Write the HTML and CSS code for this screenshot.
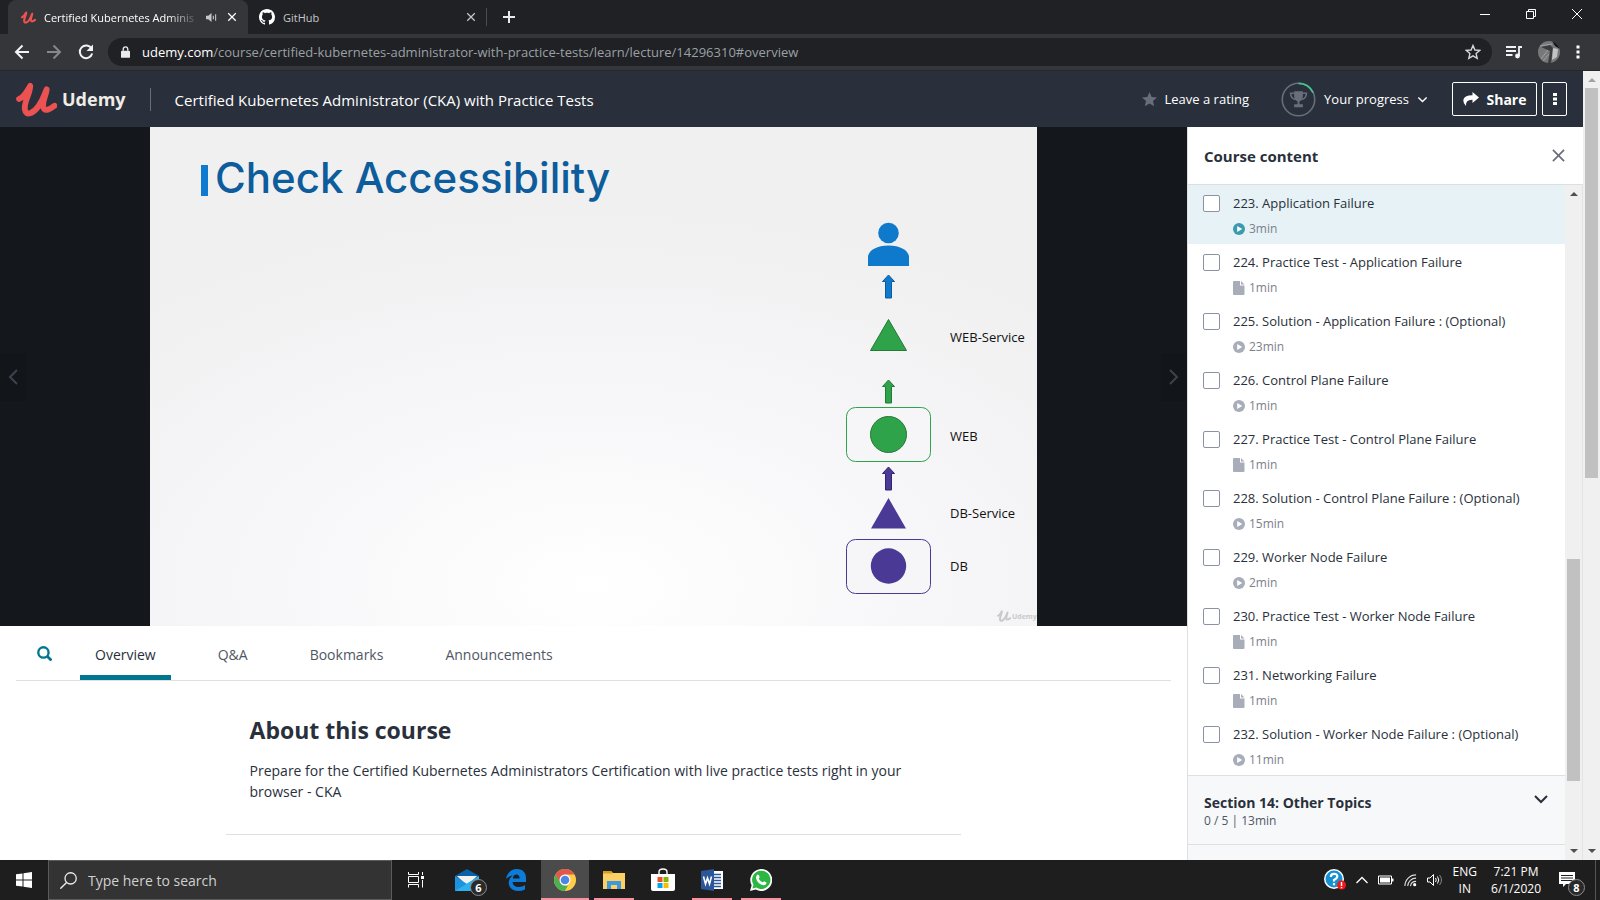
FILE: index.html
```html
<!DOCTYPE html>
<html lang="en">
<head>
<meta charset="utf-8">
<title>Certified Kubernetes Administrator (CKA) with Practice Tests</title>
<link rel="stylesheet" href="styles.css">
</head>
<body>
<svg class="defs" aria-hidden="true">
  <symbol id="udemy" viewBox="0 0 42 36">
    <path d="M3 17.500C8 16 11 10 14.500 4C15 11 8 20 9 28C10 36 18 32 23 25C28 18 29 13 31.500 7.500C31 14 26.500 20 28 26C29.500 31 35 28 39.500 24.500" fill="none" stroke="currentColor" stroke-width="6" stroke-linecap="round" stroke-linejoin="round"/>
  </symbol>
  <symbol id="cross" viewBox="0 0 16 16"><path d="M2 2L14 14M14 2L2 14" fill="none" stroke="currentColor" stroke-width="2"/></symbol>
  <symbol id="chevron" viewBox="0 0 16 10"><path d="M2 2L8 8L14 2" fill="none" stroke="currentColor" stroke-width="2"/></symbol>
  <symbol id="play" viewBox="0 0 12 12"><circle cx="6" cy="6" r="6" fill="currentColor"/><path d="M4.200 3L9.200 6L4.200 9Z" fill="#fff"/></symbol>
  <symbol id="file" viewBox="0 0 12 14"><path d="M1 0H7V4.500H11.500V13Q11.500 14 10.500 14H1Q0 14 0 13V1Q0 0 1 0ZM8 0L11.500 3.500H8Z" fill="currentColor"/></symbol>
  <symbol id="arrow" viewBox="0 0 14 26"><path d="M7 1.500L13 8H10V24.500H4V8H1Z"/></symbol>
</svg>

<header class="tabstrip">
  <div class="tab tab-active">
    <svg class="tab-logo"><use href="#udemy"/></svg>
    <span class="tab-title">Certified Kubernetes Adminis</span>
    <svg class="sound" viewBox="0 0 12 12"><path d="M0 4H2.500L6 1V11L2.500 8H0Z" fill="currentColor"/><path d="M8 4V8M10.500 2.500V9.500" stroke="currentColor" stroke-width="1.200"/></svg>
    <button class="icon-btn" aria-label="Close tab"><svg class="tab-x"><use href="#cross"/></svg></button>
  </div>
  <div class="tab tab-idle">
    <svg class="octocat" viewBox="0 0 16 16"><path fill="#fff" d="M8 0C3.580 0 0 3.580 0 8c0 3.540 2.290 6.530 5.470 7.590.4.070.55-.17.55-.38 0-.19-.01-.82-.01-1.490-2.010.37-2.530-.49-2.690-.94-.09-.23-.48-.94-.82-1.130-.28-.15-.68-.52-.01-.53.63-.01 1.080.58 1.230.82.72 1.210 1.870.87 2.330.66.07-.52.28-.87.51-1.070-1.780-.2-3.640-.89-3.640-3.950 0-.87.31-1.590.82-2.150-.08-.2-.36-1.020.08-2.120 0 0 .67-.21 2.200.82.64-.18 1.320-.27 2-.27s1.360.09 2 .27c1.530-1.040 2.200-.82 2.200-.82.44 1.100.16 1.920.08 2.120.51.56.82 1.270.82 2.150 0 3.070-1.870 3.750-3.650 3.950.29.25.54.73.54 1.480 0 1.070-.01 1.930-.01 2.200 0 .21.15.46.55.38A8.010 8.010 0 0 0 16 8c0-4.420-3.580-8-8-8z"/></svg>
    <span class="tab-title">GitHub</span>
    <button class="icon-btn" aria-label="Close tab"><svg class="tab-x"><use href="#cross"/></svg></button>
  </div>
  <button class="icon-btn new-tab" aria-label="New tab"><svg viewBox="0 0 12 12"><path d="M6 0V12M0 6H12" stroke="currentColor" stroke-width="2"/></svg></button>
  <div class="window-buttons">
    <button class="icon-btn" aria-label="Minimize"><svg viewBox="0 0 10 10"><path d="M0 5.500H10" stroke="#fff"/></svg></button>
    <button class="icon-btn" aria-label="Restore"><svg viewBox="0 0 10 10"><path d="M.5 2.500H7.500V9.500H.5ZM2.500 2.500V.5H9.500V7.500H7.500" fill="none" stroke="#fff"/></svg></button>
    <button class="icon-btn" aria-label="Close"><svg viewBox="0 0 10 10"><path d="M0 0L10 10M10 0L0 10" stroke="#fff"/></svg></button>
  </div>
</header>

<nav class="toolbar" aria-label="Browser">
  <button class="icon-btn nav-btn" aria-label="Back"><svg viewBox="0 0 16 16"><path d="M15 8H2M8.500 1.500L2 8L8.500 14.500" fill="none" stroke="currentColor" stroke-width="2"/></svg></button>
  <button class="icon-btn nav-btn dim" aria-label="Forward"><svg viewBox="0 0 16 16"><path d="M1 8H14M7.500 1.500L14 8L7.500 14.500" fill="none" stroke="currentColor" stroke-width="2"/></svg></button>
  <button class="icon-btn nav-btn" aria-label="Reload"><svg viewBox="0 0 16 16"><path d="M13.500 4.500A6.300 6.300 0 1 0 14.200 9.500" fill="none" stroke="currentColor" stroke-width="2"/><path d="M15 .5V7H8.500Z" fill="currentColor"/></svg></button>
  <div class="omnibox">
    <svg class="lock" viewBox="0 0 10 13"><path d="M1 5H9Q10 5 10 6V12Q10 13 9 13H1Q0 13 0 12V6Q0 5 1 5Z" fill="#e8eaed"/><path d="M2.500 5V3.300A2.500 2.500 0 0 1 7.500 3.300V5" fill="none" stroke="#e8eaed" stroke-width="1.500"/></svg>
    <span class="url"><b>udemy.com</b>/course/certified-kubernetes-administrator-with-practice-tests/learn/lecture/14296310#overview</span>
    <button class="icon-btn" aria-label="Bookmark"><svg class="star" viewBox="0 0 16 16"><path d="M8 1.500L9.900 6L14.700 6.400L11.100 9.600L12.200 14.300L8 11.800L3.800 14.300L4.900 9.600L1.300 6.400L6.100 6Z" fill="none" stroke="#d5d7da" stroke-width="1.400"/></svg></button>
  </div>
  <button class="icon-btn nav-btn" aria-label="Media"><svg viewBox="0 0 16 14"><path d="M0 2H10M0 6H10M0 10H6.500M13 11V2H16" fill="none" stroke="currentColor" stroke-width="1.800"/><circle cx="11.500" cy="11" r="2.400" fill="currentColor"/></svg></button>
  <button class="icon-btn" aria-label="Profile"><svg class="avatar" viewBox="0 0 22 22"><clipPath id="round"><circle cx="11" cy="11" r="11"/></clipPath><g clip-path="url(#round)"><path d="M0 0H22V22H0Z" fill="#77787a"/><path d="M14 0L22 2V8L17 5Z" fill="#151515"/><path d="M3 6L12 4L15 7L13 22H10L12 10Z" fill="#3b3b3d"/><path d="M15 7L20 8L19 16L14 19Z" fill="#c2c3c5"/><path d="M2 5L14 3M3 18L10 9M5 20L11 13" stroke="#a0a1a3"/></g></svg></button>
  <button class="icon-btn" aria-label="Chrome menu"><svg class="dots" viewBox="0 0 4 14"><path d="M.5 .5H3.500V3.500H.5ZM.5 5.500H3.500V8.500H.5ZM.5 10.500H3.500V13.500H.5Z" fill="#fff"/></svg></button>
</nav>

<div class="viewport">
  <div class="page">
    <header class="course-bar">
      <a class="brand" href="#"><svg class="brand-u"><use href="#udemy"/></svg><span>Udemy</span></a>
      <a class="course-name" href="#">Certified Kubernetes Administrator (CKA) with Practice Tests</a>
      <button class="bar-link rating"><svg class="rate-star" viewBox="0 0 16 16"><path d="M8 0L10.300 5.300L16 5.800L11.700 9.600L13 15.300L8 12.300L3 15.300L4.300 9.600L0 5.800L5.700 5.300Z" fill="#686f7a"/></svg>Leave a rating</button>
      <button class="bar-link progress">
        <svg class="trophy" viewBox="0 0 36 36"><circle cx="18" cy="18" r="16.700" fill="none" stroke="#686f7a" stroke-width="1.600"/><path d="M18 1.300A16.700 16.700 0 0 1 33 11" fill="none" stroke="#46c28e" stroke-width="1.800"/><path d="M13.500 9.500H22.500V14Q22.500 19 19 20V23H22.500V26H13.500V23H17V20Q13.500 19 13.500 14Z" fill="#686f7a"/><path d="M13.500 11.500H9.800Q10 17 15 18M22.500 11.500H26.200Q26 17 21 18" fill="none" stroke="#686f7a" stroke-width="1.500"/></svg>
        Your progress
        <svg class="chev-small"><use href="#chevron"/></svg>
      </button>
      <div class="bar-actions">
        <button class="outline share"><svg viewBox="0 0 16 14"><path d="M9.500 0L16 5.500L9.500 11V7.800Q2.500 7.500 3 14Q0 11 .3 8Q1 3.300 9.500 3.200Z" fill="#fff"/></svg>Share</button>
        <button class="outline more" aria-label="More options"><svg class="dots" viewBox="0 0 4 14"><path d="M0 1H4V4H0ZM0 5.500H4V8.500H0ZM0 10H4V13H0Z" fill="#fff"/></svg></button>
      </div>
    </header>

    <div class="columns">
      <main class="main">
        <section class="video" aria-label="Lecture video">
          <button class="step step-prev" aria-label="Previous lecture"><svg viewBox="0 0 10 16"><path d="M9 1L2 8L9 15" fill="none" stroke="currentColor" stroke-width="2"/></svg></button>
          <svg class="slide" viewBox="0 0 887 499">
            <defs><radialGradient id="paper" cx="50%" cy="92%" r="75%"><stop offset="0" stop-color="#fff"/><stop offset=".5" stop-color="#f7f7f9"/><stop offset="1" stop-color="#f0f0f1"/></radialGradient></defs>
            <rect width="887" height="499" fill="url(#paper)"/>
            <rect x="51" y="38" width="7" height="31" fill="#0f7ad0"/>
            <text class="slide-title" x="65" y="66">Check Accessibility</text>
            <g fill="#0f7acc"><circle cx="738.500" cy="106" r="10.300"/><path d="M718 139V129Q721 119 738.500 118.500Q756 119 759 129V139Z"/></g>
            <use href="#arrow" x="731.500" y="146" width="14" height="27" fill="#0f7acc" stroke="#0b5c9c"/>
            <path d="M738.500 192.500L756.500 223.500H720.500Z" fill="#2fa349" stroke="#217a36"/>
            <use href="#arrow" x="731.500" y="251" width="14" height="27" fill="#2fa349" stroke="#217a36"/>
            <rect x="696.500" y="280.500" width="84" height="54" rx="9" fill="#f6f6f8" stroke="#2fa349"/>
            <circle cx="738.500" cy="307.500" r="18" fill="#2fa349" stroke="#217a36"/>
            <use href="#arrow" x="731.500" y="338" width="14" height="27" fill="#4b3a95" stroke="#332373"/>
            <path d="M738.500 371L756 401.500H721Z" fill="#4b3a95"/>
            <rect x="696.500" y="412.500" width="84" height="54" rx="9" fill="#f6f6f8" stroke="#4b3a95"/>
            <circle cx="738.500" cy="439" r="17.700" fill="#4b3a95"/>
            <g class="slide-label"><text x="800" y="215">WEB-Service</text><text x="800" y="314">WEB</text><text x="800" y="391">DB-Service</text><text x="800" y="444">DB</text></g>
            <g class="watermark"><use href="#udemy" x="847" y="483" width="14" height="12"/><text x="862" y="492">Udemy</text></g>
          </svg>
          <button class="step step-next" aria-label="Next lecture"><svg viewBox="0 0 10 16"><path d="M1 1L8 8L1 15" fill="none" stroke="currentColor" stroke-width="2"/></svg></button>
        </section>
        <nav class="course-tabs" aria-label="Course">
          <button class="find" aria-label="Search"><svg viewBox="0 0 14 14"><circle cx="6" cy="6" r="4.800" fill="none" stroke="#007791" stroke-width="2.200"/><path d="M9.500 9.500L13.500 13.500" stroke="#007791" stroke-width="2.600"/></svg></button>
          <button class="course-tab current">Overview</button>
          <button class="course-tab">Q&amp;A</button>
          <button class="course-tab">Bookmarks</button>
          <button class="course-tab">Announcements</button>
        </nav>
        <article class="about">
          <h1>About this course</h1>
          <p>Prepare for the Certified Kubernetes Administrators Certification with live practice tests right in your browser - CKA</p>
        </article>
      </main>

      <aside class="sidebar">
        <header class="side-head"><h2>Course content</h2><button class="icon-btn" aria-label="Close content"><svg class="side-x" viewBox="0 0 14 14"><path d="M1 1L13 13M13 1L1 13" stroke="#686f7a" stroke-width="1.800"/></svg></button></header>
        <div class="side-body">
          <div class="side-list">
            <ul class="lectures">
              <li class="lecture active"><input type="checkbox" id="l223"><label for="l223">223. Application Failure</label><span class="meta"><svg class="i-play"><use href="#play"/></svg>3min</span></li>
              <li class="lecture"><input type="checkbox" id="l224"><label for="l224">224. Practice Test - Application Failure</label><span class="meta"><svg class="i-file"><use href="#file"/></svg>1min</span></li>
              <li class="lecture"><input type="checkbox" id="l225"><label for="l225">225. Solution - Application Failure : (Optional)</label><span class="meta"><svg class="i-play"><use href="#play"/></svg>23min</span></li>
              <li class="lecture"><input type="checkbox" id="l226"><label for="l226">226. Control Plane Failure</label><span class="meta"><svg class="i-play"><use href="#play"/></svg>1min</span></li>
              <li class="lecture"><input type="checkbox" id="l227"><label for="l227">227. Practice Test - Control Plane Failure</label><span class="meta"><svg class="i-file"><use href="#file"/></svg>1min</span></li>
              <li class="lecture"><input type="checkbox" id="l228"><label for="l228">228. Solution - Control Plane Failure : (Optional)</label><span class="meta"><svg class="i-play"><use href="#play"/></svg>15min</span></li>
              <li class="lecture"><input type="checkbox" id="l229"><label for="l229">229. Worker Node Failure</label><span class="meta"><svg class="i-play"><use href="#play"/></svg>2min</span></li>
              <li class="lecture"><input type="checkbox" id="l230"><label for="l230">230. Practice Test - Worker Node Failure</label><span class="meta"><svg class="i-file"><use href="#file"/></svg>1min</span></li>
              <li class="lecture"><input type="checkbox" id="l231"><label for="l231">231. Networking Failure</label><span class="meta"><svg class="i-file"><use href="#file"/></svg>1min</span></li>
              <li class="lecture"><input type="checkbox" id="l232"><label for="l232">232. Solution - Worker Node Failure : (Optional)</label><span class="meta"><svg class="i-play"><use href="#play"/></svg>11min</span></li>
            </ul>
            <button class="section"><span><strong>Section 14: Other Topics</strong><small>0 / 5 | 13min</small></span><svg class="chev"><use href="#chevron"/></svg></button>
            <div class="section-next"></div>
          </div>
          <div class="scrollbar list-scroll"><i class="up"></i><span class="track"><b class="thumb"></b></span><i class="down"></i></div>
        </div>
      </aside>
    </div>
  </div>
  <div class="scrollbar page-scroll"><i class="up faded"></i><span class="track"><b class="thumb"></b></span><i class="down"></i></div>
</div>

<footer class="taskbar">
  <button class="icon-btn start" aria-label="Start"><svg viewBox="0 0 16 16"><path d="M0 2.300L6.500 1.400V7.500H0ZM7.500 1.200L16 0V7.500H7.500ZM0 8.500H6.500V14.600L0 13.700ZM7.500 8.500H16V16L7.500 14.800Z" fill="#fff"/></svg></button>
  <label class="win-search"><svg viewBox="0 0 16 16"><circle cx="10" cy="6" r="5.300" fill="none" stroke="#eee" stroke-width="1.200"/><path d="M6.200 9.800L.3 15.700" stroke="#eee" stroke-width="1.300"/></svg><input type="text" placeholder="Type here to search" aria-label="Type here to search"></label>
  <button class="app" aria-label="Task view"><svg class="i16" viewBox="0 0 16 16"><path d="M.5 0V2.500H10.500V0M.5 4.500H10.500V10.500H.5ZM.5 15.500V12.500H10.500V15.500M14.500 0V3M14.500 8V15.500" fill="none" stroke="#fff"/><path d="M13 4H16V7H13Z" fill="#fff"/></svg></button>
  <button class="app mail" aria-label="Mail"><svg class="i24" viewBox="0 0 24 24"><path d="M0 8L12 1L24 8V11H0Z" fill="#0b61a8"/><path d="M2 8H22L14 16H10Z" fill="#f2f2f2"/><path d="M0 8L12 16L24 8V23H0Z" fill="#1c93dc"/><path d="M0 23L24 8V23Z" fill="#2cb1ee"/></svg><span class="badge">6</span></button>
  <button class="app" aria-label="Edge"><svg class="i22" viewBox="0 0 22 22"><path d="M1 10C2 4 6 0 12 0C18 0 21 4 21 9V13H7.500C8 17 11 18 14 18Q17 18 20 16.300V20.500Q17 22 13 22C7 22 3.500 18 3.700 13.500C4 10 5.500 8 8 6.500Q3.500 7 1 10ZM7.700 9.500H14.700Q14.500 5.500 11.300 5.500Q8.500 5.500 7.700 9.500Z" fill="#0c7cda"/></svg></button>
  <button class="app front open" aria-label="Chrome"><svg class="i22" viewBox="0 0 22 22"><circle cx="11" cy="11" r="11" fill="#ffcd46"/><path d="M1.500 5.500A11 11 0 0 1 20.500 5.500H11L6 14Z" fill="#e2574c"/><path d="M1.500 5.500L6.300 13.700L11 16.500H14L10.800 22A11 11 0 0 1 1.500 5.500Z" fill="#4caf50"/><circle cx="11" cy="11" r="5.500" fill="#fff"/><circle cx="11" cy="11" r="4.300" fill="#4a86e8"/></svg></button>
  <button class="app open" aria-label="File Explorer"><svg class="i22" viewBox="0 0 22 22"><path d="M0 2H8L10 4H22V20H0Z" fill="#fbd065"/><path d="M0 2H8L9.500 4.500H0Z" fill="#d89b1c"/><path d="M4 20V12H18V20H14V16H8V20Z" fill="#3f97dc"/></svg></button>
  <button class="app" aria-label="Store"><svg class="i24" viewBox="0 0 24 24"><path d="M8 7V4Q8 1 12 1Q16 1 16 4V7" fill="none" stroke="#fff" stroke-width="1.400"/><path d="M0 6H24V21Q24 23 22 23H2Q0 23 0 21Z" fill="#fff"/><path d="M6.500 9H11.500V14H6.500Z" fill="#f25022"/><path d="M12.500 9H17.500V14H12.500Z" fill="#7fba00"/><path d="M6.500 15H11.500V20H6.500Z" fill="#00a4ef"/><path d="M12.500 15H17.500V20H12.500Z" fill="#ffb900"/></svg></button>
  <button class="app open" aria-label="Word"><svg class="i22" viewBox="0 0 22 22"><path d="M10 2H22V20H10Z" fill="#fff"/><path d="M13 5.500H20M13 8.500H20M13 11.500H20M13 14.500H20M13 17.500H20" stroke="#2b579a" stroke-width="1.400"/><path d="M0 2L13 0V22L0 20Z" fill="#2b579a"/><path d="M2.500 7.500L4.500 15L6.500 9L8.500 15L10.500 7.500" fill="none" stroke="#fff" stroke-width="1.600"/></svg></button>
  <button class="app open" aria-label="WhatsApp"><svg class="i22" viewBox="0 0 22 22"><path d="M0 22L1.600 16.300A11 11 0 1 1 5.700 20.500Z" fill="#fff"/><path d="M2.400 19.600L3.500 15.800A9.200 9.200 0 1 1 6.300 18.600Z" fill="#2bb741"/><path d="M7.500 5.500L9 6L9.600 8.500L8.700 9.800Q10.200 12.500 12.800 13.500L14 12.300L16.500 13.500Q16.500 16 13.800 16.300Q7.500 15.500 6 9Q6 6.500 7.500 5.500Z" fill="#fff"/></svg></button>
  <div class="tray">
    <svg class="i22" viewBox="0 0 22 22"><circle cx="10" cy="10" r="10" fill="#fff"/><circle cx="10" cy="10" r="8.500" fill="#1590d0"/><path d="M6.800 8Q6.800 4.800 10 4.800Q13.400 4.800 13.300 7.700Q13 9.500 10 11V12.500M10 14V16.200" fill="none" stroke="#fff" stroke-width="2.200"/><circle cx="17.500" cy="16" r="4.500" fill="#f01818"/><path d="M17.500 13V17M17.500 18V19.300" stroke="#fff" stroke-width="1.400"/></svg>
    <svg class="t-up" viewBox="0 0 12 8"><path d="M.5 7L6 1.500L11.500 7" fill="none" stroke="#fff" stroke-width="1.300"/></svg>
    <svg class="t-bat" viewBox="0 0 16 10"><path d="M.5 1H13.500V9H.5Z" fill="none" stroke="#fff"/><path d="M2 2.500H12V7.500H2ZM14 3.500H15.500V6.500H14Z" fill="#fff"/></svg>
    <svg class="t-net" viewBox="0 0 14 14"><path d="M1 13A12 12 0 0 1 13 1M4 13A9 9 0 0 1 13 4.500M7 13A6 6 0 0 1 13 8" fill="none" stroke="#ddd" stroke-width="1.200"/><circle cx="11.500" cy="11.500" r="1.700" fill="#fff"/></svg>
    <svg class="t-vol" viewBox="0 0 16 14"><path d="M.5 5H3L6.500 1.500V12.500L3 9H.5Z" fill="none" stroke="#fff"/><path d="M8.500 5Q10 7 8.500 9M10.500 3.500Q13 7 10.500 10.500" fill="none" stroke="#fff"/><path d="M12.500 2Q16.500 7 12.500 12" fill="none" stroke="#888"/></svg>
    <span class="tray-text lang">ENG<br>IN</span>
    <span class="tray-text clock">7:21 PM<br>6/1/2020</span>
    <button class="notes" aria-label="Notifications"><svg class="i16" viewBox="0 0 16 16"><path d="M0 0H16V12H7L4 15V12H0Z" fill="#fff"/><path d="M2 3.500H14M2 6H14M2 8.500H14" stroke="#1f1f1f"/></svg><span class="badge">8</span></button>
    <i class="desk"></i>
  </div>
</footer>
</body>
</html>
```
FILE: styles.css
```css
* { box-sizing: border-box; }
body { margin: 0; height: 100vh; display: flex; flex-direction: column; overflow: hidden; font: 14px "Open Sans", "Noto Sans", sans-serif; color: #29303b; background: #fff; }
button, input { font: inherit; color: inherit; }
button { padding: 0; border: 0; background: none; }
a { color: inherit; text-decoration: none; }
svg { display: block; flex: none; }
.defs { position: absolute; width: 0; height: 0; }
.icon-btn { display: grid; place-items: center; }

.tabstrip { display: flex; height: 34px; padding-left: 8px; background: #202124; color: #e8eaed; font-size: 11px; }
.tab { display: flex; align-items: center; width: 239px; padding: 0 11px 0 13px; }
.tab-active { width: 240px; border-radius: 8px 8px 0 0; background: #35363a; color: #fff; }
.tab-idle { border-right: 1px solid #4a4c50; margin: 8px 0; color: #c4c7ca; padding: 0 10px 0 11px; }
.tab-title { flex: 1; min-width: 0; white-space: nowrap; padding-left: 8px; }
.tab-active .tab-title { -webkit-mask-image: linear-gradient(90deg, #000 80%, transparent); mask-image: linear-gradient(90deg, #000 80%, transparent); }
.tab-logo { width: 15px; height: 13px; color: #ec5252; }
.sound { width: 11px; height: 11px; margin: 0 10px 0 6px; color: #c4c7ca; }
.tab-x { width: 10px; height: 10px; }
.octocat { width: 16px; height: 16px; }
.new-tab { width: 44px; }
.new-tab svg { width: 12px; height: 12px; }
.window-buttons { display: flex; margin-left: auto; height: 28px; }
.window-buttons .icon-btn { width: 46px; }
.window-buttons svg { width: 10px; height: 10px; }

.toolbar { display: flex; align-items: center; gap: 16px; height: 37px; padding: 0 20px 0 14px; background: #35363a; border-bottom: 1px solid #26272b; color: #f1f3f4; }
.nav-btn svg { width: 16px; height: 16px; }
.dim { color: #87888b; }
.omnibox { flex: 1; display: flex; align-items: center; height: 28px; margin: 0 -2px 0 -2px; padding: 0 11px 0 13px; border-radius: 14px; background: #202124; }
.lock { width: 9px; height: 12px; }
.url { flex: 1; padding-left: 12px; font-size: 13px; color: #9aa0a6; white-space: nowrap; overflow: hidden; }
.url b { font-weight: 400; color: #fff; }
.star { width: 16px; height: 16px; }
.avatar { width: 22px; height: 22px; }
.dots { width: 4px; height: 14px; }

.viewport { flex: 1; min-height: 0; display: flex; }
.page { flex: 1; min-width: 0; display: flex; flex-direction: column; }
.course-bar { display: flex; align-items: center; height: 56px; flex: none; padding: 0 16px; background: #29303b; color: #fff; }
.brand { display: flex; align-items: center; gap: 5px; padding-right: 24px; font-size: 18px; font-weight: 700; line-height: 22px; border-right: 1px solid #686f7a; color: #f0ece6; }
.brand-u { width: 41px; height: 35px; margin: -6px 0; color: #ec5252; }
.course-name { padding: 2px 0 0 24px; font-size: 15px; }
.bar-link { display: flex; align-items: center; gap: 8px; }
.rating { margin-left: auto; font-size: 13px; }
.rate-star { width: 15px; height: 15px; }
.progress { margin: 0 24px 0 32px; font-size: 13px; }
.trophy { width: 35px; height: 35px; }
.chev-small { width: 11px; height: 7px; }
.bar-actions { display: flex; gap: 5px; }
.outline { height: 34px; border: 1px solid #fff; border-radius: 2px; display: flex; align-items: center; justify-content: center; gap: 8px; font-size: 14px; font-weight: 700; }
.share { width: 85px; }
.share svg { width: 16px; height: 14px; }
.more { width: 25px; }

.columns { flex: 1; min-height: 0; display: flex; }
.main { flex: 1; min-width: 0; background: #fff; overflow: hidden; }
.video { position: relative; display: flex; justify-content: center; aspect-ratio: 1187 / 499; background: #14171c; }
.slide { height: 100%; }
.slide-title { font: 500 42px Inter, sans-serif; fill: #0d5c9c; }
.slide-label { font: 13px "Open Sans", sans-serif; fill: #111; }
.watermark { font: 700 7px "Open Sans", sans-serif; fill: #c9c9cb; color: #c9c9cb; }
.step { position: absolute; top: 50%; width: 26px; height: 48px; margin-top: -24px; display: grid; place-items: center; background: #121519; color: #3d434c; }
.step svg { width: 10px; height: 16px; }
.step-prev { left: 0; }
.step-next { right: 0; }
.course-tabs { display: flex; align-items: stretch; height: 55px; margin: 0 16px; border-bottom: 1px solid #dedfe0; font-size: 14px; }
.find { width: 28px; margin: 0 22px 0 14px; display: grid; place-items: center; }
.find svg { width: 15px; height: 15px; }
.course-tab { padding: 7px 15px 0; margin-right: 32px; color: #505763; border-bottom: 5px solid transparent; }
.current { color: #29303b; border-color: #007791; }
.about { width: 62%; margin: 31px auto 0; padding: 0 24px 32px; border-bottom: 1px solid #dedfe0; }
.about h1 { margin: 0 0 12px; font-size: 23px; line-height: 36px; }
.about p { margin: 0; font-size: 14px; line-height: 21px; }

.sidebar { width: 396px; flex: none; display: flex; flex-direction: column; border-left: 1px solid #dedfe0; background: #fff; }
.side-head { display: flex; align-items: center; justify-content: space-between; flex: none; height: 58px; padding: 0 18px 0 16px; border-bottom: 1px solid #dedfe0; }
.side-head h2 { margin: 0; font-size: 15px; }
.side-x { width: 13px; height: 13px; }
.side-body { flex: 1; min-height: 0; display: flex; }
.side-list { flex: 1; min-width: 0; overflow: hidden; }
.lectures { margin: 0; padding: 0; list-style: none; }
.lecture { display: grid; grid-template-columns: 17px 1fr; column-gap: 13px; row-gap: 8px; align-items: center; height: 59px; padding: 8px 0 7px 15px; }
.lecture input { appearance: none; width: 17px; height: 17px; margin: 0; border: 1px solid #8a92a3; border-radius: 2px; background: #fff; }
.lecture label { font-size: 13px; line-height: 20px; white-space: nowrap; }
.meta { grid-column: 2; display: flex; align-items: center; gap: 4px; font-size: 12px; line-height: 16px; color: #7b818b; }
.active { background: #e6f2f5; }
.i-play { width: 12px; height: 12px; color: #a9adba; }
.active .i-play { color: #3a9bb0; }
.i-file { width: 12px; height: 14px; color: #a9adba; }
.section { display: flex; justify-content: space-between; width: 100%; height: 70px; padding: 18px 16px 0; border: solid #dedfe0; border-width: 1px 0; background: #f7f8fa; text-align: left; }
.section strong { display: block; font-size: 14px; line-height: 18px; }
.section small { display: block; font-size: 12px; line-height: 17px; color: #505763; }
.chev { width: 16px; height: 10px; }
.section-next { height: 40px; background: #f7f8fa; }

.scrollbar { flex: none; display: flex; flex-direction: column; align-items: center; width: 17px; padding: 7px 0; background: #f0f0f0; }
.scrollbar i { border: solid transparent; border-width: 0 4px; }
.scrollbar .up { border-bottom: 4px solid #505050; }
.scrollbar .faded { border-bottom-color: #a3a3a3; }
.scrollbar .down { border-top: 4px solid #505050; }
.track { flex: 1; width: 13px; margin: 6px 0; display: flex; flex-direction: column; }
.thumb { background: #c1c1c1; }
.page-scroll .thumb { height: 390px; }
.list-scroll { width: 18px; border-right: 1px solid #e4e4e4; }
.list-scroll .track { justify-content: flex-end; padding-bottom: 62px; }
.list-scroll .thumb { height: 222px; }

.taskbar { flex: none; display: flex; height: 40px; background: #1f1e1e; color: #fff; }
.start { width: 48px; }
.start svg { width: 16px; height: 16px; }
.win-search { display: flex; align-items: center; gap: 11px; width: 344px; padding: 0 11px; border: 1px solid #5b5b5b; background: #333; }
.win-search svg { width: 17px; height: 17px; }
.win-search input { flex: 1; min-width: 0; padding: 0; border: 0; background: none; font-size: 14px; }
.win-search input::placeholder { color: #d0d0d0; opacity: 1; }
.app { position: relative; width: 48px; margin-right: 1px; display: grid; place-items: center; }
.mail { margin-left: 2px; }
.front { background: #4b4b4b; }
.open::after { content: ""; position: absolute; left: 4px; right: 4px; bottom: 0; height: 2px; background: #f7929e; }
.front::after { left: 0; right: 0; }
.i16 { width: 16px; height: 16px; }
.i22 { width: 22px; height: 22px; }
.i24 { width: 24px; height: 24px; }
.badge { position: absolute; right: 4px; bottom: 4px; width: 17px; height: 17px; border: 1px solid #8d8d8d; border-radius: 50%; background: #2a2a2a; font-size: 11px; font-weight: 700; line-height: 15px; text-align: center; }
.tray { display: flex; align-items: center; gap: 10px; margin-left: auto; }
.t-up { width: 12px; height: 8px; }
.t-bat { width: 16px; height: 10px; }
.t-net { width: 13px; height: 13px; }
.t-vol { width: 16px; height: 14px; }
.tray-text { font-size: 12px; line-height: 17px; text-align: center; white-space: nowrap; }
.clock { margin-left: 4px; }
.notes { position: relative; width: 34px; height: 40px; padding: 0 0 0 8px; display: grid; align-items: center; }
.notes .badge { right: 0; }
.desk { width: 1px; height: 40px; margin-right: 4px; background: #555; }
```
